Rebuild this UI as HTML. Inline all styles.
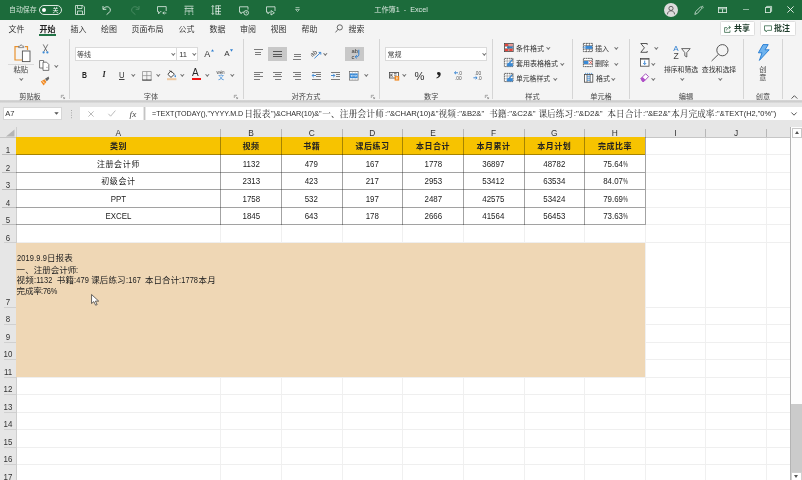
<!DOCTYPE html>
<html lang="zh-CN"><head><meta charset="utf-8"><title>工作簿1 - Excel</title>
<style>
*{box-sizing:border-box;margin:0;padding:0}
html,body{width:802px;height:480px;overflow:hidden;background:#fff}
body{position:relative;font-family:"Liberation Sans","Noto Sans CJK SC",sans-serif;font-size:8px;color:#333;line-height:1}
.a{position:absolute;white-space:nowrap}
.t{position:absolute;white-space:nowrap;line-height:10px;height:10px}
.c{text-align:center}
#title{left:0;top:0;width:802px;height:19.7px;background:#1c6b3b}
#tabs{left:0;top:19.7px;width:802px;height:18.3px;background:#f4f4f4}
#ribbon{left:0;top:38px;width:802px;height:62.5px;background:#f4f4f4}
#rshadow{left:0;top:100.3px;width:802px;height:2.9px;background:linear-gradient(#dcdcdc,#cbcbcb 35%,#d2d2d2 70%,#e0e0e0)}
#fbar{left:0;top:103px;width:802px;height:24px;background:#e6e6e6}
.sep{position:absolute;top:39px;width:1px;height:60px;background:#d5d5d5}
.tab{position:absolute;margin-left:0.4px;top:24.8px;height:10px;line-height:10px;font-size:8px;color:#333;white-space:nowrap}
.gl{position:absolute;top:91.6px;height:9px;line-height:9px;font-size:7.2px;color:#444;white-space:nowrap;text-align:center}
.box{position:absolute;background:#fff;border:0.6px solid #dadada}
.hl{position:absolute;height:1px;background:#efefef}
.vl{position:absolute;width:1px;background:#f0f0f0}
.ch{position:absolute;top:127.6px;height:10px;line-height:10px;font-size:8.4px;color:#333;text-align:center}
.rh{position:absolute;left:0;width:16px;font-size:9px;color:#333;text-align:center;height:10px;line-height:10px;transform:scaleX(0.88)}
.cell{position:absolute;text-align:center;font-size:8.2px;color:#222;white-space:nowrap;height:17.6px;line-height:20.6px}
.cj{font-size:8px;letter-spacing:0.6px}
.nm{font-size:8.6px;transform:scaleX(0.92);line-height:19.6px}
.pc{display:inline-block;transform:scaleX(0.64);transform-origin:0 50%;margin-right:-2.75px}
.hd{font-weight:bold;color:#222;font-size:8px;letter-spacing:0.5px}
svg{position:absolute;overflow:visible}
#wrap{position:absolute;left:0;top:0;width:802px;height:480px;will-change:transform}
</style></head><body><div id="wrap">

<div class="a" id="grid" style="left:0;top:127px;width:802px;height:353px;background:#fff"></div>
<div class="a" style="left:0;top:127px;width:790.5px;height:10px;background:#e6e6e6"></div>
<div class="a" style="left:0;top:127px;width:16px;height:353px;background:#e6e6e6"></div>
<svg style="left:5.4px;top:129.2px" width="10" height="8" viewBox="0 0 10 8"><path d="M9.5 0.5V7.5H1Z" fill="#b5b5b5"/></svg>
<div class="vl" style="left:220.3px;top:137px;height:343px"></div>
<div class="vl" style="left:280.9px;top:137px;height:343px"></div>
<div class="vl" style="left:341.6px;top:137px;height:343px"></div>
<div class="vl" style="left:402.2px;top:137px;height:343px"></div>
<div class="vl" style="left:462.8px;top:137px;height:343px"></div>
<div class="vl" style="left:523.5px;top:137px;height:343px"></div>
<div class="vl" style="left:584.1px;top:137px;height:343px"></div>
<div class="vl" style="left:644.7px;top:137px;height:343px"></div>
<div class="vl" style="left:705.3px;top:137px;height:343px"></div>
<div class="vl" style="left:766.0px;top:137px;height:343px"></div>
<div class="hl" style="left:16px;top:154.0px;width:774.5px"></div>
<div class="hl" style="left:16px;top:171.6px;width:774.5px"></div>
<div class="hl" style="left:16px;top:189.2px;width:774.5px"></div>
<div class="hl" style="left:16px;top:206.8px;width:774.5px"></div>
<div class="hl" style="left:16px;top:224.4px;width:774.5px"></div>
<div class="hl" style="left:16px;top:242.0px;width:774.5px"></div>
<div class="hl" style="left:16px;top:306.5px;width:774.5px"></div>
<div class="hl" style="left:16px;top:324.0px;width:774.5px"></div>
<div class="hl" style="left:16px;top:341.5px;width:774.5px"></div>
<div class="hl" style="left:16px;top:359.0px;width:774.5px"></div>
<div class="hl" style="left:16px;top:376.5px;width:774.5px"></div>
<div class="hl" style="left:16px;top:394.0px;width:774.5px"></div>
<div class="hl" style="left:16px;top:411.5px;width:774.5px"></div>
<div class="hl" style="left:16px;top:429.0px;width:774.5px"></div>
<div class="hl" style="left:16px;top:446.5px;width:774.5px"></div>
<div class="hl" style="left:16px;top:464.0px;width:774.5px"></div>
<div class="hl" style="left:16px;top:481.5px;width:774.5px"></div>
<div class="vl" style="left:220.3px;top:129.3px;height:7.5px;background:#b8b8b8"></div>
<div class="vl" style="left:280.9px;top:129.3px;height:7.5px;background:#b8b8b8"></div>
<div class="vl" style="left:341.6px;top:129.3px;height:7.5px;background:#b8b8b8"></div>
<div class="vl" style="left:402.2px;top:129.3px;height:7.5px;background:#b8b8b8"></div>
<div class="vl" style="left:462.8px;top:129.3px;height:7.5px;background:#b8b8b8"></div>
<div class="vl" style="left:523.5px;top:129.3px;height:7.5px;background:#b8b8b8"></div>
<div class="vl" style="left:584.1px;top:129.3px;height:7.5px;background:#b8b8b8"></div>
<div class="vl" style="left:644.7px;top:129.3px;height:7.5px;background:#b8b8b8"></div>
<div class="vl" style="left:705.3px;top:129.3px;height:7.5px;background:#b8b8b8"></div>
<div class="vl" style="left:766.0px;top:129.3px;height:7.5px;background:#b8b8b8"></div>
<div class="hl" style="left:0;top:136.5px;width:790.5px;background:#c6c6c6"></div>
<div class="vl" style="left:15.5px;top:127px;height:353px;background:#cecece"></div>
<div class="hl" style="left:2px;top:154.0px;width:14px;background:#bcbcbc"></div>
<div class="hl" style="left:2px;top:171.6px;width:14px;background:#bcbcbc"></div>
<div class="hl" style="left:2px;top:189.2px;width:14px;background:#bcbcbc"></div>
<div class="hl" style="left:2px;top:206.8px;width:14px;background:#bcbcbc"></div>
<div class="hl" style="left:2px;top:224.4px;width:14px;background:#bcbcbc"></div>
<div class="hl" style="left:4px;top:242.0px;width:12px;background:#d0d0d0"></div>
<div class="hl" style="left:4px;top:306.5px;width:12px;background:#d0d0d0"></div>
<div class="hl" style="left:4px;top:324.0px;width:12px;background:#d0d0d0"></div>
<div class="hl" style="left:4px;top:341.5px;width:12px;background:#d0d0d0"></div>
<div class="hl" style="left:4px;top:359.0px;width:12px;background:#d0d0d0"></div>
<div class="hl" style="left:4px;top:376.5px;width:12px;background:#d0d0d0"></div>
<div class="hl" style="left:4px;top:394.0px;width:12px;background:#d0d0d0"></div>
<div class="hl" style="left:4px;top:411.5px;width:12px;background:#d0d0d0"></div>
<div class="hl" style="left:4px;top:429.0px;width:12px;background:#d0d0d0"></div>
<div class="hl" style="left:4px;top:446.5px;width:12px;background:#d0d0d0"></div>
<div class="hl" style="left:4px;top:464.0px;width:12px;background:#d0d0d0"></div>
<div class="hl" style="left:4px;top:481.5px;width:12px;background:#d0d0d0"></div>
<div class="ch" style="left:16.0px;width:204.8px">A</div>
<div class="ch" style="left:220.8px;width:60.6px">B</div>
<div class="ch" style="left:281.4px;width:60.6px">C</div>
<div class="ch" style="left:342.1px;width:60.6px">D</div>
<div class="ch" style="left:402.7px;width:60.6px">E</div>
<div class="ch" style="left:463.3px;width:60.6px">F</div>
<div class="ch" style="left:524.0px;width:60.6px">G</div>
<div class="ch" style="left:584.6px;width:60.6px">H</div>
<div class="ch" style="left:645.2px;width:60.6px">I</div>
<div class="ch" style="left:705.8px;width:60.6px">J</div>
<div class="rh" style="top:145.0px">1</div>
<div class="rh" style="top:162.6px">2</div>
<div class="rh" style="top:180.2px">3</div>
<div class="rh" style="top:197.8px">4</div>
<div class="rh" style="top:215.4px">5</div>
<div class="rh" style="top:233.0px">6</div>
<div class="rh" style="top:296.8px">7</div>
<div class="rh" style="top:314.3px">8</div>
<div class="rh" style="top:331.8px">9</div>
<div class="rh" style="top:349.3px">10</div>
<div class="rh" style="top:366.8px">11</div>
<div class="rh" style="top:384.3px">12</div>
<div class="rh" style="top:401.8px">13</div>
<div class="rh" style="top:419.3px">14</div>
<div class="rh" style="top:436.8px">15</div>
<div class="rh" style="top:454.3px">16</div>
<div class="rh" style="top:471.8px">17</div>
<div class="a" style="left:16px;top:137px;width:629.2px;height:17.5px;background:#f7c300"></div>
<div class="a" style="left:16px;top:242.5px;width:629.2px;height:134.2px;background:#efd7b5"></div>
<div class="hl" style="left:16px;top:154.0px;width:629.2px;background:rgba(0,0,0,0.32)"></div>
<div class="hl" style="left:16px;top:171.6px;width:629.2px;background:rgba(0,0,0,0.32)"></div>
<div class="hl" style="left:16px;top:189.2px;width:629.2px;background:rgba(0,0,0,0.32)"></div>
<div class="hl" style="left:16px;top:206.8px;width:629.2px;background:rgba(0,0,0,0.32)"></div>
<div class="hl" style="left:16px;top:224.4px;width:629.2px;background:rgba(0,0,0,0.32)"></div>
<div class="vl" style="left:220.3px;top:137px;height:87.9px;background:rgba(0,0,0,0.32)"></div>
<div class="vl" style="left:280.9px;top:137px;height:87.9px;background:rgba(0,0,0,0.32)"></div>
<div class="vl" style="left:341.6px;top:137px;height:87.9px;background:rgba(0,0,0,0.32)"></div>
<div class="vl" style="left:402.2px;top:137px;height:87.9px;background:rgba(0,0,0,0.32)"></div>
<div class="vl" style="left:462.8px;top:137px;height:87.9px;background:rgba(0,0,0,0.32)"></div>
<div class="vl" style="left:523.5px;top:137px;height:87.9px;background:rgba(0,0,0,0.32)"></div>
<div class="vl" style="left:584.1px;top:137px;height:87.9px;background:rgba(0,0,0,0.32)"></div>
<div class="vl" style="left:644.7px;top:137px;height:87.9px;background:rgba(0,0,0,0.32)"></div>
<div class="cell hd" style="left:16.0px;top:136.9px;width:204.8px">类别</div>
<div class="cell hd" style="left:220.8px;top:136.9px;width:60.6px">视频</div>
<div class="cell hd" style="left:281.4px;top:136.9px;width:60.6px">书籍</div>
<div class="cell hd" style="left:342.1px;top:136.9px;width:60.6px">课后练习</div>
<div class="cell hd" style="left:402.7px;top:136.9px;width:60.6px">本日合计</div>
<div class="cell hd" style="left:463.3px;top:136.9px;width:60.6px">本月累计</div>
<div class="cell hd" style="left:524.0px;top:136.9px;width:60.6px">本月计划</div>
<div class="cell hd" style="left:584.6px;top:136.9px;width:60.6px">完成比率</div>
<div class="cell cj" style="left:16.0px;top:154.5px;width:204.8px">注册会计师</div>
<div class="cell nm" style="left:220.8px;top:154.5px;width:60.6px">1132</div>
<div class="cell nm" style="left:281.4px;top:154.5px;width:60.6px">479</div>
<div class="cell nm" style="left:342.1px;top:154.5px;width:60.6px">167</div>
<div class="cell nm" style="left:402.7px;top:154.5px;width:60.6px">1778</div>
<div class="cell nm" style="left:463.3px;top:154.5px;width:60.6px">36897</div>
<div class="cell nm" style="left:524.0px;top:154.5px;width:60.6px">48782</div>
<div class="cell nm" style="left:584.6px;top:154.5px;width:60.6px">75.64<span class="pc">%</span></div>
<div class="cell cj" style="left:16.0px;top:172.1px;width:204.8px">初级会计</div>
<div class="cell nm" style="left:220.8px;top:172.1px;width:60.6px">2313</div>
<div class="cell nm" style="left:281.4px;top:172.1px;width:60.6px">423</div>
<div class="cell nm" style="left:342.1px;top:172.1px;width:60.6px">217</div>
<div class="cell nm" style="left:402.7px;top:172.1px;width:60.6px">2953</div>
<div class="cell nm" style="left:463.3px;top:172.1px;width:60.6px">53412</div>
<div class="cell nm" style="left:524.0px;top:172.1px;width:60.6px">63534</div>
<div class="cell nm" style="left:584.6px;top:172.1px;width:60.6px">84.07<span class="pc">%</span></div>
<div class="cell nm" style="left:16.0px;top:189.7px;width:204.8px">PPT</div>
<div class="cell nm" style="left:220.8px;top:189.7px;width:60.6px">1758</div>
<div class="cell nm" style="left:281.4px;top:189.7px;width:60.6px">532</div>
<div class="cell nm" style="left:342.1px;top:189.7px;width:60.6px">197</div>
<div class="cell nm" style="left:402.7px;top:189.7px;width:60.6px">2487</div>
<div class="cell nm" style="left:463.3px;top:189.7px;width:60.6px">42575</div>
<div class="cell nm" style="left:524.0px;top:189.7px;width:60.6px">53424</div>
<div class="cell nm" style="left:584.6px;top:189.7px;width:60.6px">79.69<span class="pc">%</span></div>
<div class="cell nm" style="left:16.0px;top:207.3px;width:204.8px">EXCEL</div>
<div class="cell nm" style="left:220.8px;top:207.3px;width:60.6px">1845</div>
<div class="cell nm" style="left:281.4px;top:207.3px;width:60.6px">643</div>
<div class="cell nm" style="left:342.1px;top:207.3px;width:60.6px">178</div>
<div class="cell nm" style="left:402.7px;top:207.3px;width:60.6px">2666</div>
<div class="cell nm" style="left:463.3px;top:207.3px;width:60.6px">41564</div>
<div class="cell nm" style="left:524.0px;top:207.3px;width:60.6px">56453</div>
<div class="cell nm" style="left:584.6px;top:207.3px;width:60.6px">73.63<span class="pc">%</span></div>
<style>.k2{font-weight:normal;font-size:8.5px}.a7{font-size:8.5px;color:#222}.l2{display:inline-block;transform-origin:0 50%;white-space:pre}</style>
<div class="t a7" id="a7_0" style="left:16.6px;top:253.2px;letter-spacing:0.17px"><span class="l2" style="transform:scaleX(0.875);margin-right:-4.14px">2019.9.9</span><b class="k2">日报表</b></div>
<div class="t a7" id="a7_1" style="left:16.6px;top:264.8px;letter-spacing:0.04px"><b class="k2">一、注册会计师</b><span class="l2" style="transform:scaleX(0.875);margin-right:-0.30px">:</span></div>
<div class="t a7" id="a7_2" style="left:16.6px;top:275.3px;letter-spacing:0.11px"><b class="k2">视频</b><span class="l2" style="transform:scaleX(0.875);margin-right:-3.17px">:1132&nbsp; </span><b class="k2">书籍</b><span class="l2" style="transform:scaleX(0.875);margin-right:-2.36px">:479 </span><b class="k2">课后练习</b><span class="l2" style="transform:scaleX(0.875);margin-right:-2.66px">:167&nbsp; </span><b class="k2">本日合计</b><span class="l2" style="transform:scaleX(0.875);margin-right:-2.66px">:1778</span><b class="k2">本月</b></div>
<div class="t a7" id="a7_3" style="left:16.6px;top:286.4px;letter-spacing:-0.21px"><b class="k2">完成率</b><span class="l2" style="transform:scaleX(0.875);margin-right:-2.42px">:76%</span></div>
<svg style="left:91px;top:293.7px" width="8.8" height="12" viewBox="0 0 8 12" preserveAspectRatio="none"><path d="M0.5 0.5V9.5L2.6 7.6L4.2 11.2L5.6 10.6L4 7.1H7Z" fill="#fff" stroke="#333" stroke-width="0.7"/></svg>
<div class="a" style="left:790.2px;top:127px;width:11.8px;height:353px;background:#fdfdfd;border-left:1px solid #b4b4b4"></div>
<div class="a" style="left:792px;top:127.5px;width:10px;height:10px;background:#fff;border:0.6px solid #c8c8c8"></div>
<svg style="left:795px;top:131px" width="4" height="3" viewBox="0 0 4 3"><path d="M0 3L2 0L4 3Z" fill="#555"/></svg>
<div class="a" style="left:791.3px;top:404px;width:10.7px;height:67.6px;background:#cbcbcb"></div>
<div class="a" style="left:791.3px;top:471.6px;width:10.7px;height:9px;background:#fff;border:0.6px solid #d0d0d0"></div>
<svg style="left:794.2px;top:475px" width="4" height="3" viewBox="0 0 4 3"><path d="M0 0L2 3L4 0Z" fill="#555"/></svg>
<!-- backgrounds -->
<div class="a" id="title"></div>
<div class="a" id="tabs"></div>
<div class="a" id="ribbon"></div>
<div class="a" id="rshadow"></div>
<div class="a" id="fbar"></div>

<!-- title bar -->
<div class="t" style="left:9px;top:4.5px;font-size:6.9px;color:#cfe3d6">自动保存</div>
<div class="a" style="left:38.8px;top:5.2px;width:23px;height:9.4px;border:0.7px solid #dbe9e0;border-radius:5px"></div>
<div class="a" style="left:42.2px;top:8px;width:3.8px;height:3.8px;border-radius:50%;background:#fff"></div>
<div class="t" style="left:52.5px;top:5px;font-size:6px;color:#fff">关</div>
<!-- save -->
<svg style="left:75px;top:5px" width="10" height="10" viewBox="0 0 10 10" fill="none" stroke="#dcebe2" stroke-width="0.8"><path d="M0.5 0.5H8L9.5 2V9.5H0.5Z"/><path d="M2.5 0.5V3.5H7V0.5"/><path d="M2.5 9.5V6H7.5V9.5"/></svg>
<!-- undo -->
<svg style="left:102px;top:5px" width="10" height="10" viewBox="0 0 10 10" fill="none" stroke="#e3efe8" stroke-width="0.9"><path d="M1 1V4.3H4.3"/><path d="M1.2 4.2C2.5 1.8 5.5 1 7.3 2.6C9 4.2 8.6 6.4 6.8 7.8L4.6 9.6"/></svg>
<!-- redo dim -->
<svg style="left:129.5px;top:5px" width="10" height="10" viewBox="0 0 10 10" fill="none" stroke="#4f8f68" stroke-width="0.9"><path d="M9 1V4.3H5.7"/><path d="M8.8 4.2C7.5 1.8 4.5 1 2.7 2.6C1 4.2 1.4 6.4 3.2 7.8L5.4 9.6"/></svg>
<!-- comment arrow -->
<svg style="left:156.8px;top:5.5px" width="10" height="10" viewBox="0 0 10 10" fill="none" stroke="#e3efe8" stroke-width="0.8"><path d="M4.4 5.6H3.4L1.6 7.8V5.6H0.5V0.6H9.2V5"/><path d="M9.4 7H5.8M7.2 5.6L5.8 7L7.2 8.4"/></svg>
<!-- col width -->
<svg style="left:183.5px;top:5px" width="10" height="10" viewBox="0 0 10 10" fill="none" stroke="#e3efe8" stroke-width="0.8"><path d="M0.5 1.2H9.5M1 3.6H9M2.2 2.4L1 3.6L2.2 4.8M7.8 2.4L9 3.6L7.8 4.8"/><path d="M1.2 5.5V10M5 5.5V10M8.8 5.5V10" stroke-dasharray="1.2 0.6"/><path d="M1.2 6H8.8"/></svg>
<!-- row height -->
<svg style="left:211px;top:5px" width="10" height="10" viewBox="0 0 10 10" fill="none" stroke="#e3efe8" stroke-width="0.8"><path d="M1.8 0.5V9.5M0.6 1.8L1.8 0.6L3 1.8M0.6 8.2L1.8 9.4L3 8.2"/><path d="M4.5 0.8H10M4.5 3.6H10M4.5 6.4H10M4.5 9.2H10"/><path d="M5 0.8V9.2M7.5 0.8V9.2"/></svg>
<!-- comment clock -->
<svg style="left:238.5px;top:5.5px" width="10" height="10" viewBox="0 0 10 10" fill="none" stroke="#e3efe8" stroke-width="0.8"><path d="M5 6.2H3.4L2 7.8V6.2H0.5V0.8H9V3.6"/><circle cx="7.2" cy="6.8" r="2.3"/><path d="M7.2 5.6V6.9H8.2"/></svg>
<!-- comment play -->
<svg style="left:266px;top:5.5px" width="10" height="10" viewBox="0 0 10 10" fill="none" stroke="#e3efe8" stroke-width="0.8"><path d="M4 6.2H3.2L2 7.8V6.2H0.5V0.8H9V5"/><path d="M5 4.6V9L8.4 6.8Z"/></svg>
<!-- qat dropdown -->
<svg style="left:294.5px;top:6.5px" width="5" height="6" viewBox="0 0 5 6" fill="none" stroke="#cfe3d6" stroke-width="0.7"><path d="M0.5 0.6H4.5"/><path d="M0.6 2.4L2.5 4.6L4.4 2.4Z"/></svg>
<div class="t c" style="left:351px;top:4.5px;width:100px;font-size:7.2px;color:#dce9e1">工作簿1&nbsp; -&nbsp; Excel</div>
<!-- avatar -->
<div class="a" style="left:663.8px;top:2.5px;width:14px;height:14px;border-radius:50%;background:#dcdcdc"></div>
<svg style="left:666px;top:4.5px" width="10" height="10" viewBox="0 0 10 10" fill="none" stroke="#555" stroke-width="0.9"><circle cx="5" cy="3.4" r="2.1"/><path d="M1.4 9.4C1.6 6.8 3.2 5.8 5 5.8C6.8 5.8 8.4 6.8 8.6 9.4"/></svg>
<!-- pen -->
<svg style="left:693.5px;top:5.5px" width="10" height="9" viewBox="0 0 10 9" fill="none" stroke="#d5e6dc" stroke-width="0.8"><path d="M0.8 8.4L1.6 5.6L6.2 1.2C7 0.6 8.2 1.6 7.6 2.6L3.4 7.4Z"/><path d="M7.4 0.6L9.2 0.2M8.4 2L9.6 1.6"/></svg>
<!-- ribbon display -->
<svg style="left:718px;top:7px" width="9" height="6" viewBox="0 0 9 6" fill="none" stroke="#e3efe8" stroke-width="0.8"><rect x="0.4" y="0.4" width="8.2" height="5.2"/><path d="M0.4 1.8H8.6M4.5 1.8V5.6"/></svg>
<div class="a" style="left:742.5px;top:9.2px;width:6px;height:0.8px;background:#8fb9a0"></div>
<svg style="left:764.5px;top:6px" width="7" height="7" viewBox="0 0 7 7" fill="none" stroke="#e3efe8" stroke-width="0.8"><rect x="0.4" y="1.6" width="5" height="5"/><path d="M1.6 1.6V0.4H6.6V5.4H5.4"/></svg>
<svg style="left:787px;top:6.3px" width="7" height="7" viewBox="0 0 7 7" fill="none" stroke="#f0f6f2" stroke-width="0.9"><path d="M0.4 0.4L6.6 6.6M6.6 0.4L0.4 6.6"/></svg>

<!-- tabs -->
<div class="tab" style="left:8px">文件</div>
<div class="tab" style="left:39px;font-weight:bold;color:#222">开始</div>
<div class="a" style="left:39px;top:34.3px;width:16.5px;height:2px;background:#217346"></div>
<div class="tab" style="left:70px">插入</div>
<div class="tab" style="left:100.5px">绘图</div>
<div class="tab" style="left:131px">页面布局</div>
<div class="tab" style="left:178px">公式</div>
<div class="tab" style="left:209px">数据</div>
<div class="tab" style="left:239.5px">审阅</div>
<div class="tab" style="left:270px">视图</div>
<div class="tab" style="left:301px">帮助</div>
<svg style="left:335px;top:24px" width="8" height="9" viewBox="0 0 8 9" fill="none" stroke="#444" stroke-width="0.8"><circle cx="4.8" cy="3.4" r="2.6"/><path d="M3 5.4L0.5 8.4"/></svg>
<div class="tab" style="left:348px">搜索</div>
<!-- share / comment buttons -->
<div class="a" style="left:719.5px;top:21px;width:35.5px;height:14.8px;background:#fff;border:0.6px solid #dedede;border-radius:1.5px"></div>
<svg style="left:724px;top:24.5px" width="8" height="8" viewBox="0 0 8 8" fill="none" stroke="#3a6b4c" stroke-width="0.8"><path d="M3 2.6H0.6V7.4H6V5.4"/><path d="M2.6 5.4C2.8 3.6 4 2.4 6 2.4M4.8 0.8L6.6 2.4L4.8 4"/></svg>
<div class="t" style="left:734px;top:23.5px;font-size:8px;font-weight:bold;color:#1d3b29">共享</div>
<div class="a" style="left:759.5px;top:21px;width:36px;height:14.8px;background:#fff;border:0.6px solid #dedede;border-radius:1.5px"></div>
<svg style="left:764px;top:24.5px" width="8" height="8" viewBox="0 0 8 8" fill="none" stroke="#3a6b4c" stroke-width="0.8"><path d="M0.5 0.8H7.5V5.4H3.4L2 7V5.4H0.5Z"/></svg>
<div class="t" style="left:774px;top:23.5px;font-size:8px;font-weight:bold;color:#1d3b29">批注</div>

<style>.cv{position:absolute;width:2.6px;height:2.6px;border-right:0.7px solid #707070;border-bottom:0.7px solid #707070;transform:rotate(45deg) scale(1,1)}.rt{position:absolute;white-space:nowrap;font-size:7px;line-height:9px;height:9px;color:#333}</style>
<svg style="left:14px;top:44px" width="17" height="19" viewBox="0 0 17 19" fill="none"><path d="M5 2.6H1V16H8" stroke="#e8912d" stroke-width="1.2"/><path d="M11 2.6H13.5V6" stroke="#e8912d" stroke-width="1.2"/><path d="M4.6 3.6V2.2H6L7.2 0.6L8.4 2.2H9.8V3.6Z" stroke="#666" stroke-width="0.7" fill="#f3f3f3"/><rect x="8.4" y="7" width="7.6" height="10.6" stroke="#555" stroke-width="0.9" fill="#fff"/></svg>
<div class="a" style="left:8px;top:64px;width:26px;height:0.7px;background:#dadada"></div>
<div class="rt" style="left:13.5px;top:64.9px;font-size:7.3px;color:#444">粘贴</div>
<i class="cv" style="left:19.7px;top:77.3px;border-color:#707070"></i>
<svg style="left:41.5px;top:43.5px" width="7" height="10" viewBox="0 0 7 10" fill="none"><path d="M1.2 0.4L5 7.4M5.8 0.4L2 7.4" stroke="#555" stroke-width="0.8"/><circle cx="1.6" cy="8.4" r="1.1" fill="#3a8ad6"/><circle cx="5.4" cy="8.4" r="1.1" fill="#3a8ad6"/></svg>
<svg style="left:39px;top:59.5px" width="11" height="11" viewBox="0 0 11 11" fill="#fff" stroke="#555" stroke-width="0.8"><path d="M0.6 0.5H4.6V8H0.6Z"/><path d="M4 2.2H7.6L9.8 4.4V10.4H4Z"/><path d="M7.4 7.4H8.6" stroke-width="0.6"/></svg>
<i class="cv" style="left:55.3px;top:63.8px;border-color:#707070"></i>
<svg style="left:40px;top:75.5px" width="10" height="10" viewBox="0 0 10 10" fill="none"><path d="M0.8 5.6L4.6 3.2L6.4 6L3.6 9.4Z" fill="#f08a24"/><path d="M2.6 5.2L4.6 7.4" stroke="#fff" stroke-width="0.8"/><path d="M5 2.8L8.6 0.6L9.2 2.8L6.8 5.2Z" fill="#666"/></svg>
<div class="gl" style="left:0px;width:60px">剪贴板</div>
<svg style="left:61px;top:94.5px" width="4" height="4" viewBox="0 0 4 4" fill="none" stroke="#777" stroke-width="0.6"><path d="M0.3 3V0.3H3"/><path d="M1.6 1.6L3.6 3.6M3.6 2.2V3.6H2.2"/></svg>
<div class="sep" style="left:69px"></div>
<div class="box" style="left:74.7px;top:46.7px;width:102px;height:14.6px"></div>
<div class="box" style="left:176.2px;top:46.7px;width:21.6px;height:14.6px"></div>
<div class="rt" style="left:77px;top:49.5px;font-size:7px;color:#444">等线</div>
<i class="cv" style="left:171.7px;top:52.4px;border-color:#707070"></i>
<div class="rt" style="left:179.2px;top:49.5px;font-size:7.6px;color:#333">11</div>
<i class="cv" style="left:193.3px;top:52.4px;border-color:#707070"></i>
<div class="rt" style="left:204.3px;top:48.5px;font-size:9px;line-height:10px">A</div>
<svg style="left:210.6px;top:49px" width="3" height="3" viewBox="0 0 3 3"><path d="M0 2.6L1.5 0.2L3 2.6Z" fill="#2f7fd0"/></svg>
<div class="rt" style="left:224.3px;top:49.2px;font-size:8px;line-height:10px">A</div>
<svg style="left:229.8px;top:49.2px" width="3" height="3" viewBox="0 0 3 3"><path d="M0 0.3L1.5 2.7L3 0.3Z" fill="#2f7fd0"/></svg>
<div class="rt" style="left:82px;top:70px;font-size:8.6px;font-weight:bold;line-height:10px;color:#222;transform:scaleX(0.8);transform-origin:0 50%">B</div>
<div class="rt" style="left:102.4px;top:70px;font-size:8px;font-style:italic;line-height:10px;color:#222;font-family:'Liberation Serif',serif;font-weight:bold">I</div>
<div class="rt" style="left:119.2px;top:69.6px;font-size:8.4px;line-height:10px;color:#333;border-bottom:0.8px solid #444;height:10.2px;transform:scaleX(0.92);transform-origin:0 50%">U</div>
<i class="cv" style="left:132.2px;top:73.3px;border-color:#707070"></i>
<svg style="left:141.8px;top:70.5px" width="10" height="10" viewBox="0 0 10 10" fill="none" stroke="#8a8a8a" stroke-width="0.7"><path d="M0.5 9V0.5H9.2V9"/><path d="M4.8 0.5V9M0.5 4.6H9.2"/><path d="M0.2 9.1H9.5" stroke="#333" stroke-width="1.1"/></svg>
<i class="cv" style="left:156.7px;top:73.3px;border-color:#707070"></i>
<svg style="left:167px;top:69.8px" width="10" height="11" viewBox="0 0 10 11" fill="none"><path d="M3.8 0.8L7.4 4.2L4 7.4L0.9 4.4Z" stroke="#333" stroke-width="0.9" fill="#fff"/><path d="M2.4 0.4L4.6 2.6" stroke="#333" stroke-width="0.8"/><path d="M8 4.4C9.2 6 9.2 7 8.3 7.3C7.3 7 7.4 6 8 4.4Z" fill="#2f7fd0"/><rect x="0" y="8.2" width="9.4" height="2" fill="#efc9a0"/></svg>
<i class="cv" style="left:181.4px;top:73.3px;border-color:#707070"></i>
<div class="rt" style="left:191.9px;top:68.3px;font-size:10px;line-height:10px;color:#2a2a2a">A</div>
<div class="a" style="left:191.8px;top:77.8px;width:9.4px;height:2.2px;background:#f01414"></div>
<i class="cv" style="left:206.0px;top:73.3px;border-color:#707070"></i>
<div class="rt" style="left:216.6px;top:69.6px;font-size:4.6px;line-height:5px;height:5px;color:#444;letter-spacing:-0.2px">wén</div>
<div class="rt" style="left:218px;top:73.4px;font-size:6.2px;line-height:7px;height:7px;color:#4f95da">文</div>
<i class="cv" style="left:230.7px;top:73.3px;border-color:#707070"></i>
<div class="gl" style="left:121px;width:60px">字体</div>
<svg style="left:234.3px;top:94.5px" width="4" height="4" viewBox="0 0 4 4" fill="none" stroke="#777" stroke-width="0.6"><path d="M0.3 3V0.3H3"/><path d="M1.6 1.6L3.6 3.6M3.6 2.2V3.6H2.2"/></svg>
<div class="sep" style="left:242.5px"></div>
<div class="a" style="left:267.7px;top:46.7px;width:19.2px;height:14.5px;background:#c8c8c8"></div>
<div class="a" style="left:345.3px;top:46.7px;width:19px;height:14.5px;background:#c8c8c8"></div>
<div class="a" style="left:253.7px;top:48.8px;width:9px;height:0.75px;background:#7c7c7c"></div>
<div class="a" style="left:254.9px;top:51.5px;width:6.5px;height:0.75px;background:#7c7c7c"></div>
<div class="a" style="left:254.9px;top:54.2px;width:6.5px;height:0.75px;background:#7c7c7c"></div>
<div class="a" style="left:272.8px;top:50.6px;width:9.4px;height:0.75px;background:#555"></div>
<div class="a" style="left:272.8px;top:53.5px;width:9.4px;height:0.75px;background:#555"></div>
<div class="a" style="left:272.8px;top:56.4px;width:9.4px;height:0.75px;background:#555"></div>
<div class="a" style="left:293.5px;top:53.5px;width:7px;height:0.75px;background:#7c7c7c"></div>
<div class="a" style="left:293.5px;top:56.2px;width:7px;height:0.75px;background:#7c7c7c"></div>
<div class="a" style="left:292.7px;top:58.9px;width:8.6px;height:0.75px;background:#7c7c7c"></div>
<svg style="left:311px;top:48.5px" width="11" height="10" viewBox="0 0 11 10" fill="none"><text x="-0.4" y="6.2" font-size="6.2" fill="#333" transform="rotate(-35 3 5)" font-family="Liberation Sans,sans-serif">ab</text><path d="M3.4 9.4L9.6 3.6M7.6 3.4H9.8V5.6" stroke="#2f7fd0" stroke-width="0.9"/></svg>
<i class="cv" style="left:323.7px;top:52.4px;border-color:#707070"></i>
<svg style="left:351.8px;top:49px" width="9" height="10" viewBox="0 0 9 10" fill="none"><text x="-0.4" y="4.4" font-size="5.8" fill="#333" font-family="Liberation Sans,sans-serif">ab</text><path d="M6.8 0.8V5.6C6.8 7.6 5.2 7.8 3.4 7.8M4.8 6.2L3.2 7.8L4.8 9.4" stroke="#2f7fd0" stroke-width="1"/><text x="-0.4" y="9.6" font-size="5.8" fill="#333" font-family="Liberation Sans,sans-serif">c</text></svg>
<div class="a" style="left:253.7px;top:71.5px;width:9px;height:0.75px;background:#7c7c7c"></div>
<div class="a" style="left:253.7px;top:73.9px;width:6.5px;height:0.75px;background:#7c7c7c"></div>
<div class="a" style="left:253.7px;top:76.3px;width:9px;height:0.75px;background:#7c7c7c"></div>
<div class="a" style="left:253.7px;top:78.7px;width:6.5px;height:0.75px;background:#7c7c7c"></div>
<div class="a" style="left:273.0px;top:71.5px;width:9px;height:0.75px;background:#7c7c7c"></div>
<div class="a" style="left:274.5px;top:73.9px;width:6px;height:0.75px;background:#7c7c7c"></div>
<div class="a" style="left:273.0px;top:76.3px;width:9px;height:0.75px;background:#7c7c7c"></div>
<div class="a" style="left:274.5px;top:78.7px;width:6px;height:0.75px;background:#7c7c7c"></div>
<div class="a" style="left:292.5px;top:71.5px;width:8.6px;height:0.75px;background:#7c7c7c"></div>
<div class="a" style="left:295.1px;top:73.9px;width:6px;height:0.75px;background:#7c7c7c"></div>
<div class="a" style="left:292.5px;top:76.3px;width:8.6px;height:0.75px;background:#7c7c7c"></div>
<div class="a" style="left:295.1px;top:78.7px;width:6px;height:0.75px;background:#7c7c7c"></div>
<div class="a" style="left:311.5px;top:71.6px;width:9.2px;height:0.75px;background:#7c7c7c"></div>
<div class="a" style="left:316.1px;top:74.0px;width:4.6px;height:0.75px;background:#7c7c7c"></div>
<div class="a" style="left:316.1px;top:76.4px;width:4.6px;height:0.75px;background:#7c7c7c"></div>
<div class="a" style="left:311.5px;top:78.8px;width:9.2px;height:0.75px;background:#7c7c7c"></div>
<svg style="left:311.5px;top:73px" width="5" height="5" viewBox="0 0 5 5"><path d="M4 2.5H0.4M1.8 0.8L0.1 2.5L1.8 4.2" fill="none" stroke="#2f7fd0" stroke-width="0.9"/></svg>
<div class="a" style="left:331.0px;top:71.6px;width:9.2px;height:0.75px;background:#7c7c7c"></div>
<div class="a" style="left:335.6px;top:74.0px;width:4.6px;height:0.75px;background:#7c7c7c"></div>
<div class="a" style="left:335.6px;top:76.4px;width:4.6px;height:0.75px;background:#7c7c7c"></div>
<div class="a" style="left:331.0px;top:78.8px;width:9.2px;height:0.75px;background:#7c7c7c"></div>
<svg style="left:331px;top:73px" width="5" height="5" viewBox="0 0 5 5"><path d="M0 2.5H3.6M2.2 0.8L3.9 2.5L2.2 4.2" fill="none" stroke="#2f7fd0" stroke-width="0.9"/></svg>
<svg style="left:349px;top:70.5px" width="10" height="10" viewBox="0 0 10 10" fill="none"><rect x="0.5" y="0.5" width="8.6" height="8.6" stroke="#666" stroke-width="0.7" fill="#fff"/><rect x="0.9" y="2.4" width="7.8" height="4.8" fill="#3a8ad6"/><path d="M2 4.8H7.6M3 3.8L2 4.8L3 5.8M6.6 3.8L7.6 4.8L6.6 5.8" stroke="#fff" stroke-width="0.6"/><path d="M3.4 0.5V2.4M6.2 0.5V2.4M3.4 7.2V9.1M6.2 7.2V9.1" stroke="#aaa" stroke-width="0.5"/></svg>
<i class="cv" style="left:365.0px;top:73.3px;border-color:#707070"></i>
<div class="gl" style="left:286px;width:40px">对齐方式</div>
<svg style="left:371.3px;top:94.5px" width="4" height="4" viewBox="0 0 4 4" fill="none" stroke="#777" stroke-width="0.6"><path d="M0.3 3V0.3H3"/><path d="M1.6 1.6L3.6 3.6M3.6 2.2V3.6H2.2"/></svg>
<div class="sep" style="left:378.5px"></div>
<div class="box" style="left:384.8px;top:46.7px;width:102.2px;height:14.6px"></div>
<div class="rt" style="left:387.4px;top:49.5px;font-size:7px;color:#444">常规</div>
<i class="cv" style="left:482.5px;top:52.4px;border-color:#707070"></i>
<svg style="left:389px;top:71.5px" width="11" height="9" viewBox="0 0 11 9" fill="none"><rect x="0.4" y="0.4" width="9" height="5.6" stroke="#444" stroke-width="0.8" fill="#fafafa"/><path d="M1.8 1.6V4.8M1.8 3.2H3.2M3.4 1.6L2.6 3.2L3.6 4.8M5 1.6H7.6M5 3.2H7.6" stroke="#444" stroke-width="0.7"/><rect x="5.6" y="4" width="4.6" height="4.6" fill="#f08a24"/><path d="M7 5.2H8.8M7 6.4H8.8M7.9 5.2V8" stroke="#fff" stroke-width="0.5"/></svg>
<i class="cv" style="left:403.4px;top:73.3px;border-color:#707070"></i>
<div class="rt" style="left:414.6px;top:69.5px;font-size:11.2px;line-height:12px;height:12px;color:#333">%</div>
<div class="rt" style="left:436.2px;top:57.4px;font-size:21px;line-height:22px;height:22px;color:#222;font-family:'Liberation Serif',serif;font-weight:bold">,</div>
<svg style="left:454px;top:70.8px" width="9" height="9" viewBox="0 0 9 9" fill="none"><path d="M4 1.8H0.6M2 0.4L0.5 1.8L2 3.2" stroke="#2f7fd0" stroke-width="0.9"/><text x="4" y="4" font-size="4.8" fill="#555" font-family="Liberation Sans,sans-serif">.0</text><text x="1" y="9" font-size="4.8" fill="#555" font-family="Liberation Sans,sans-serif">.00</text></svg>
<svg style="left:473px;top:70.8px" width="9" height="9" viewBox="0 0 9 9" fill="none"><text x="1.4" y="4" font-size="4.8" fill="#555" font-family="Liberation Sans,sans-serif">.00</text><path d="M0.4 6.8H4M2.6 5.4L4.1 6.8L2.6 8.2" stroke="#2f7fd0" stroke-width="0.9"/><text x="4.6" y="9" font-size="4.8" fill="#555" font-family="Liberation Sans,sans-serif">.0</text></svg>
<div class="gl" style="left:401.3px;width:60px">数字</div>
<svg style="left:485px;top:94.5px" width="4" height="4" viewBox="0 0 4 4" fill="none" stroke="#777" stroke-width="0.6"><path d="M0.3 3V0.3H3"/><path d="M1.6 1.6L3.6 3.6M3.6 2.2V3.6H2.2"/></svg>
<div class="sep" style="left:492px"></div>
<svg style="left:503.5px;top:43px" width="10" height="9" viewBox="0 0 10 9" fill="none"><rect x="0.4" y="0.4" width="8.8" height="8.2" stroke="#444" stroke-width="0.8" fill="#fff"/><rect x="0.9" y="0.9" width="3.4" height="2.3" fill="#e8463c"/><rect x="5.2" y="0.9" width="3.5" height="2.3" fill="#e8463c" opacity="0.55"/><rect x="3" y="3.4" width="5.7" height="2" fill="#2f7fd0"/><rect x="0.9" y="5.8" width="3.4" height="2.3" fill="#e8463c"/><rect x="5.2" y="5.8" width="3.5" height="2.3" fill="#e8463c"/><path d="M4.7 0.4V8.6M0.4 3.3H9.2M0.4 5.6H9.2" stroke="#555" stroke-width="0.5"/></svg>
<div class="rt" style="left:516px;top:43.5px">条件格式</div>
<i class="cv" style="left:546.7px;top:46.4px;border-color:#707070"></i>
<svg style="left:503.5px;top:58.3px" width="10" height="9" viewBox="0 0 10 9" fill="none"><rect x="0.4" y="0.4" width="8.6" height="8.2" stroke="#444" stroke-width="0.8" fill="#fff" stroke-dasharray="1.6 0.5"/><path d="M0.4 3H9M0.4 5.8H9M3.2 0.4V8.6M6 0.4V8.6" stroke="#777" stroke-width="0.5"/><rect x="3.4" y="5.2" width="5.4" height="3.2" fill="#3a8ad6"/><path d="M3 7.8L8.4 1.6" stroke="#3a8ad6" stroke-width="1.3"/><path d="M7.6 1L9 2.2" stroke="#666" stroke-width="1"/></svg>
<div class="rt" style="left:516px;top:58.7px">套用表格格式</div>
<i class="cv" style="left:560.7px;top:61.6px;border-color:#707070"></i>
<svg style="left:503.5px;top:73.3px" width="10" height="9" viewBox="0 0 10 9" fill="none"><rect x="0.4" y="0.4" width="8.6" height="8.2" stroke="#444" stroke-width="0.8" fill="#fff" stroke-dasharray="1.6 0.5"/><path d="M0.4 3H9M0.4 5.8H9M3.2 0.4V8.6M6 0.4V8.6" stroke="#777" stroke-width="0.5"/><rect x="3.4" y="5.2" width="5.4" height="3.2" fill="#3a8ad6"/><path d="M3 7.8L8.4 1.6" stroke="#3a8ad6" stroke-width="1.3"/><path d="M7.6 1L9 2.2" stroke="#666" stroke-width="1"/></svg>
<div class="rt" style="left:516px;top:73.8px;font-size:6.8px">单元格样式</div>
<i class="cv" style="left:553.7px;top:76.6px;border-color:#707070"></i>
<div class="gl" style="left:502.5px;width:60px">样式</div>
<div class="sep" style="left:572.3px"></div>
<svg style="left:582.5px;top:43px" width="10" height="9" viewBox="0 0 10 9" fill="none"><rect x="0.4" y="0.4" width="9" height="8.2" stroke="#444" stroke-width="0.8" fill="#fff" stroke-dasharray="2 0.5"/><path d="M0.4 2.6H9.4M0.4 6.2H9.4M3.4 0.4V8.6M6.4 0.4V8.6" stroke="#555" stroke-width="0.6"/><rect x="2.4" y="2.9" width="6.8" height="3" fill="#3a8ad6"/><path d="M0.2 4.4H2.2M1.2 3.4L0.2 4.4L1.2 5.4" stroke="#3a8ad6" stroke-width="0.6"/></svg>
<div class="rt" style="left:595px;top:43.5px">插入</div>
<i class="cv" style="left:615.4px;top:46.4px;border-color:#707070"></i>
<svg style="left:582.5px;top:58.3px" width="10" height="9" viewBox="0 0 10 9" fill="none"><rect x="0.4" y="0.4" width="9" height="8.2" stroke="#444" stroke-width="0.8" fill="#fff" stroke-dasharray="1.8 0.5"/><path d="M0.4 2.6H9.4M0.4 6.2H9.4" stroke="#555" stroke-width="0.6"/><rect x="0.8" y="3" width="4.6" height="3" fill="#3a8ad6"/><path d="M6.4 3.2L8.8 5.8M8.8 3.2L6.4 5.8" stroke="#e8463c" stroke-width="0.8"/></svg>
<div class="rt" style="left:595px;top:58.7px">删除</div>
<i class="cv" style="left:615.4px;top:61.6px;border-color:#707070"></i>
<svg style="left:583.5px;top:73.3px" width="10" height="10" viewBox="0 0 10 10" fill="none"><rect x="0.4" y="1.4" width="8.4" height="7.8" stroke="#444" stroke-width="0.8" fill="#fff"/><path d="M3 1.4V9.2M6.2 1.4V9.2" stroke="#444" stroke-width="0.7"/><path d="M3 3.2H6.2M3 5.2H6.2M3 7.2H6.2" stroke="#3a8ad6" stroke-width="0.9"/><path d="M1 0.4H8.2" stroke="#3a8ad6" stroke-width="0.8" stroke-dasharray="1.2 0.8"/></svg>
<div class="rt" style="left:596px;top:73.8px">格式</div>
<i class="cv" style="left:612.0px;top:76.6px;border-color:#707070"></i>
<div class="gl" style="left:571px;width:60px">单元格</div>
<div class="sep" style="left:629px"></div>
<svg style="left:640px;top:42.7px" width="8" height="10" viewBox="0 0 8 10" fill="none" stroke="#444" stroke-width="0.9"><path d="M7.2 1.8V0.5H0.8L4.4 4.8L0.8 9.3H7.2V8"/></svg>
<i class="cv" style="left:654.7px;top:46.4px;border-color:#707070"></i>
<svg style="left:640px;top:58.3px" width="10" height="9" viewBox="0 0 10 9" fill="none"><rect x="0.4" y="0.4" width="8.6" height="7.8" stroke="#444" stroke-width="0.8" fill="#fff"/><path d="M0.4 1.4H9" stroke="#444" stroke-width="0.6"/><path d="M4.7 2.6V6.4M3.2 5L4.7 6.6L6.2 5" stroke="#2f7fd0" stroke-width="0.9"/></svg>
<i class="cv" style="left:652.0px;top:61.6px;border-color:#707070"></i>
<svg style="left:640px;top:73.3px" width="10" height="10" viewBox="0 0 10 10" fill="none"><path d="M0.8 5.6L5.6 0.8L8.6 3.6L4 8.4H2.6Z" stroke="#9b3fb5" stroke-width="0.9" fill="#fff"/><path d="M1.6 5L4.6 8" stroke="#9b3fb5" stroke-width="0.8"/><path d="M0.9 5.6L2.6 3.9L5.4 6.7L3.9 8.4L3.4 8.8H2.2Z" fill="#b14ec9"/></svg>
<i class="cv" style="left:652.0px;top:76.6px;border-color:#707070"></i>
<div class="rt" style="left:673.3px;top:43.5px;font-size:8px;line-height:9px;color:#2f7fd0">A</div>
<div class="rt" style="left:673.6px;top:52.2px;font-size:8.6px;line-height:9px;color:#444">Z</div>
<svg style="left:680.5px;top:47.5px" width="10" height="10" viewBox="0 0 10 10" fill="none" stroke="#444" stroke-width="0.8"><path d="M0.6 0.6H9.2L5.8 4.6V9L3.8 7.8V4.6Z"/></svg>
<div class="rt" style="left:664px;top:65.3px;font-size:6.8px">排序和筛选</div>
<i class="cv" style="left:681.4px;top:76.8px;border-color:#707070"></i>
<svg style="left:710.5px;top:44px" width="18" height="18" viewBox="0 0 18 18" fill="none" stroke="#444" stroke-width="0.9"><circle cx="11.4" cy="6.2" r="5.6"/><path d="M7.4 10.4L0.6 17"/></svg>
<div class="rt" style="left:701.8px;top:65.3px;font-size:6.9px">查找和选择</div>
<i class="cv" style="left:718.5px;top:76.8px;border-color:#707070"></i>
<div class="gl" style="left:656px;width:60px">编辑</div>
<div class="sep" style="left:743px"></div>
<svg style="left:757px;top:44px" width="13" height="17" viewBox="0 0 13 17" fill="none"><path d="M6 0.6H11.2L8 5.8H12.2L2.4 16.4L5 8.8H1.4Z" fill="#6fb3ee" stroke="#1f78d1" stroke-width="0.9"/></svg>
<div class="rt" style="left:759.3px;top:65.3px;font-size:7.2px;color:#444">创</div>
<div class="rt" style="left:759.3px;top:73.3px;font-size:7.2px;color:#444">意</div>
<div class="gl" style="left:733px;width:60px">创意</div>
<div class="sep" style="left:782px"></div>
<svg style="left:790.6px;top:94.5px" width="7" height="4" viewBox="0 0 7 4" fill="none" stroke="#444" stroke-width="0.9"><path d="M0.5 3.6L3.4 0.7L6.3 3.6"/></svg>
<style>.k{font-weight:normal;font-size:8.8px}</style>
<!-- formula bar -->
<div class="a" style="left:2.6px;top:106.7px;width:59.8px;height:13.4px;background:#fff;border:0.6px solid #d6d6d6"></div>
<div class="t" style="left:5.2px;top:108.6px;font-size:7.6px;color:#333">A7</div>
<svg style="left:54px;top:112.2px" width="5" height="3" viewBox="0 0 5 3"><path d="M0.3 0.2H4.7L2.5 2.8Z" fill="#555"/></svg>
<div class="a" style="left:70.6px;top:110px;width:1px;height:1px;background:#aaa;box-shadow:0 2.4px 0 #aaa,0 4.8px 0 #aaa,0 7.2px 0 #aaa"></div>
<div class="a" style="left:79.7px;top:106.7px;width:63.5px;height:13.4px;background:#fff"></div>
<svg style="left:87.6px;top:110.7px" width="6" height="6" viewBox="0 0 6 6" fill="none" stroke="#a8a8a8" stroke-width="0.8"><path d="M0.4 0.4L5.6 5.6M5.6 0.4L0.4 5.6"/></svg>
<svg style="left:107.6px;top:110.2px" width="8" height="7" viewBox="0 0 8 7" fill="none" stroke="#a8a8a8" stroke-width="0.8"><path d="M0.4 3.8L2.6 6.2L7.4 0.6"/></svg>
<div class="t" style="left:129.6px;top:108.6px;font-size:9.2px;font-style:italic;font-family:'Liberation Serif',serif;color:#444">fx</div>
<div class="a" style="left:144.2px;top:106.7px;width:0.8px;height:13.4px;background:#c4c4c4"></div>
<div class="a" style="left:146px;top:106.7px;width:656px;height:13.4px;background:#fff"></div>
<span class="t fs" id="fs0" style="left:152.3px;top:109px;font-size:8px;font-family:'Liberation Sans',sans-serif;transform-origin:0 50%;transform:scaleX(0.893);color:#2a2a2a">=TEXT(TODAY(),"YYYY.M.D</span>
<span class="t fs" id="fs1" style="left:244.2px;top:109px;font-size:8.7px;font-family:'Liberation Sans','Noto Serif CJK SC',serif;letter-spacing:0.05px;color:#2a2a2a">日报表</span>
<span class="t fs" id="fs2" style="left:271.2px;top:109px;font-size:8px;font-family:'Liberation Sans',sans-serif;transform-origin:0 50%;transform:scaleX(0.905);color:#2a2a2a">")&amp;CHAR(10)&amp;"</span>
<span class="t fs" id="fs3" style="left:322.2px;top:109px;font-size:8.7px;font-family:'Liberation Sans','Noto Serif CJK SC',serif;letter-spacing:0.14px;color:#2a2a2a">一、注册会计师</span>
<span class="t fs" id="fs4" style="left:384.6px;top:109px;font-size:8px;font-family:'Liberation Sans',sans-serif;transform-origin:0 50%;transform:scaleX(0.963);color:#2a2a2a">:"&amp;CHAR(10)&amp;"</span>
<span class="t fs" id="fs5" style="left:438.4px;top:109px;font-size:8.7px;font-family:'Liberation Sans','Noto Serif CJK SC',serif;letter-spacing:0.26px;color:#2a2a2a">视频</span>
<span class="t fs" id="fs6" style="left:456.8px;top:109px;font-size:8px;font-family:'Liberation Sans',sans-serif;transform-origin:0 50%;transform:scaleX(0.959);color:#2a2a2a">:"&amp;B2&amp;"</span>
<span class="t fs" id="fs7" style="left:489.2px;top:109px;font-size:8.7px;font-family:'Liberation Sans','Noto Serif CJK SC',serif;letter-spacing:-0.09px;color:#2a2a2a">书籍</span>
<span class="t fs" id="fs8" style="left:506.9px;top:109px;font-size:8px;font-family:'Liberation Sans',sans-serif;transform-origin:0 50%;transform:scaleX(0.989);color:#2a2a2a">:"&amp;C2&amp;"</span>
<span class="t fs" id="fs9" style="left:538.4px;top:109px;font-size:8.7px;font-family:'Liberation Sans','Noto Serif CJK SC',serif;letter-spacing:0.04px;color:#2a2a2a">课后练习</span>
<span class="t fs" id="fs10" style="left:573.8px;top:109px;font-size:8px;font-family:'Liberation Sans',sans-serif;transform-origin:0 50%;transform:scaleX(1.000);color:#2a2a2a">:"&amp;D2&amp;"</span>
<span class="t fs" id="fs11" style="left:607.2px;top:109px;font-size:8.7px;font-family:'Liberation Sans','Noto Serif CJK SC',serif;letter-spacing:0.11px;color:#2a2a2a">本日合计</span>
<span class="t fs" id="fs12" style="left:642.8px;top:109px;font-size:8px;font-family:'Liberation Sans',sans-serif;transform-origin:0 50%;transform:scaleX(0.973);color:#2a2a2a">:"&amp;E2&amp;"</span>
<span class="t fs" id="fs13" style="left:671.0px;top:109px;font-size:8.7px;font-family:'Liberation Sans','Noto Serif CJK SC',serif;letter-spacing:0.01px;color:#2a2a2a">本月完成率</span>
<span class="t fs" id="fs14" style="left:715.0px;top:109px;font-size:8px;font-family:'Liberation Sans',sans-serif;transform-origin:0 50%;transform:scaleX(0.929);color:#2a2a2a">:"&amp;TEXT(H2,"0%")</span>
<svg style="left:791px;top:111.8px" width="6" height="4" viewBox="0 0 6 4" fill="none" stroke="#444" stroke-width="0.9"><path d="M0.4 0.5L3 3.2L5.6 0.5"/></svg>

</div></body></html>
